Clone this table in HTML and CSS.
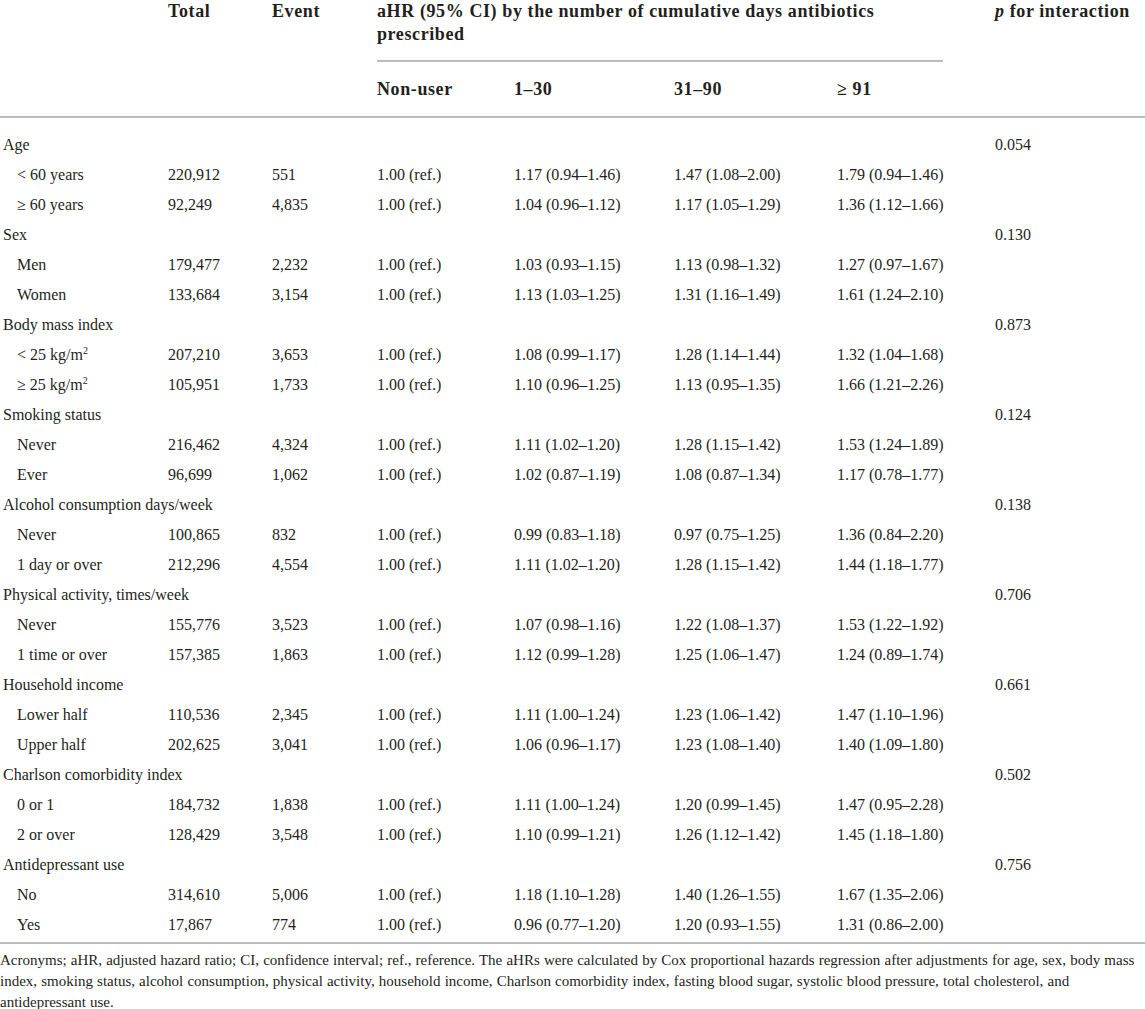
FILE: index.html
```html
<!DOCTYPE html>
<html>
<head>
  <meta charset="UTF-8">
  <link rel="stylesheet" href="styles.css">
  <title>aHR by cumulative days of antibiotics</title>
</head>
<body>
  <table class="results">
    <colgroup>
      <col class="c-label">
      <col class="c-total">
      <col class="c-event">
      <col class="c-non">
      <col class="c-d1">
      <col class="c-d2">
      <col class="c-d3">
      <col class="c-p">
    </colgroup>
    <thead>
      <tr>
	<th rowspan="2"></th>
	<th rowspan="2">Total</th>
	<th rowspan="2">Event</th>
	<th colspan="4" class="span"><div class="span-title">aHR (95% CI) by the number of cumulative days antibiotics prescribed</div></th>
	<th rowspan="2"><i>p</i> for interaction</th>
      </tr>
      <tr class="sub">
	<th>Non-user</th>
	<th>1&ndash;30</th>
	<th>31&ndash;90</th>
	<th>&ge; 91</th>
      </tr>
    </thead>
    <tbody>
      <tr class="group first"><td>Age</td><td></td><td></td><td></td><td></td><td></td><td></td><td>0.054</td></tr>
      <tr><td class="ind">&lt; 60 years</td><td>220,912</td><td>551</td><td>1.00 (ref.)</td><td>1.17 (0.94&ndash;1.46)</td><td>1.47 (1.08&ndash;2.00)</td><td>1.79 (0.94&ndash;1.46)</td><td></td></tr>
      <tr><td class="ind">&ge; 60 years</td><td>92,249</td><td>4,835</td><td>1.00 (ref.)</td><td>1.04 (0.96&ndash;1.12)</td><td>1.17 (1.05&ndash;1.29)</td><td>1.36 (1.12&ndash;1.66)</td><td></td></tr>

      <tr class="group"><td>Sex</td><td></td><td></td><td></td><td></td><td></td><td></td><td>0.130</td></tr>
      <tr><td class="ind">Men</td><td>179,477</td><td>2,232</td><td>1.00 (ref.)</td><td>1.03 (0.93&ndash;1.15)</td><td>1.13 (0.98&ndash;1.32)</td><td>1.27 (0.97&ndash;1.67)</td><td></td></tr>
      <tr><td class="ind">Women</td><td>133,684</td><td>3,154</td><td>1.00 (ref.)</td><td>1.13 (1.03&ndash;1.25)</td><td>1.31 (1.16&ndash;1.49)</td><td>1.61 (1.24&ndash;2.10)</td><td></td></tr>

      <tr class="group"><td>Body mass index</td><td></td><td></td><td></td><td></td><td></td><td></td><td>0.873</td></tr>
      <tr><td class="ind">&lt; 25 kg/m<sup>2</sup></td><td>207,210</td><td>3,653</td><td>1.00 (ref.)</td><td>1.08 (0.99&ndash;1.17)</td><td>1.28 (1.14&ndash;1.44)</td><td>1.32 (1.04&ndash;1.68)</td><td></td></tr>
      <tr><td class="ind">&ge; 25 kg/m<sup>2</sup></td><td>105,951</td><td>1,733</td><td>1.00 (ref.)</td><td>1.10 (0.96&ndash;1.25)</td><td>1.13 (0.95&ndash;1.35)</td><td>1.66 (1.21&ndash;2.26)</td><td></td></tr>

      <tr class="group"><td>Smoking status</td><td></td><td></td><td></td><td></td><td></td><td></td><td>0.124</td></tr>
      <tr><td class="ind">Never</td><td>216,462</td><td>4,324</td><td>1.00 (ref.)</td><td>1.11 (1.02&ndash;1.20)</td><td>1.28 (1.15&ndash;1.42)</td><td>1.53 (1.24&ndash;1.89)</td><td></td></tr>
      <tr><td class="ind">Ever</td><td>96,699</td><td>1,062</td><td>1.00 (ref.)</td><td>1.02 (0.87&ndash;1.19)</td><td>1.08 (0.87&ndash;1.34)</td><td>1.17 (0.78&ndash;1.77)</td><td></td></tr>

      <tr class="group"><td>Alcohol consumption days/week</td><td></td><td></td><td></td><td></td><td></td><td></td><td>0.138</td></tr>
      <tr><td class="ind">Never</td><td>100,865</td><td>832</td><td>1.00 (ref.)</td><td>0.99 (0.83&ndash;1.18)</td><td>0.97 (0.75&ndash;1.25)</td><td>1.36 (0.84&ndash;2.20)</td><td></td></tr>
      <tr><td class="ind">1 day or over</td><td>212,296</td><td>4,554</td><td>1.00 (ref.)</td><td>1.11 (1.02&ndash;1.20)</td><td>1.28 (1.15&ndash;1.42)</td><td>1.44 (1.18&ndash;1.77)</td><td></td></tr>

      <tr class="group"><td>Physical activity, times/week</td><td></td><td></td><td></td><td></td><td></td><td></td><td>0.706</td></tr>
      <tr><td class="ind">Never</td><td>155,776</td><td>3,523</td><td>1.00 (ref.)</td><td>1.07 (0.98&ndash;1.16)</td><td>1.22 (1.08&ndash;1.37)</td><td>1.53 (1.22&ndash;1.92)</td><td></td></tr>
      <tr><td class="ind">1 time or over</td><td>157,385</td><td>1,863</td><td>1.00 (ref.)</td><td>1.12 (0.99&ndash;1.28)</td><td>1.25 (1.06&ndash;1.47)</td><td>1.24 (0.89&ndash;1.74)</td><td></td></tr>

      <tr class="group"><td>Household income</td><td></td><td></td><td></td><td></td><td></td><td></td><td>0.661</td></tr>
      <tr><td class="ind">Lower half</td><td>110,536</td><td>2,345</td><td>1.00 (ref.)</td><td>1.11 (1.00&ndash;1.24)</td><td>1.23 (1.06&ndash;1.42)</td><td>1.47 (1.10&ndash;1.96)</td><td></td></tr>
      <tr><td class="ind">Upper half</td><td>202,625</td><td>3,041</td><td>1.00 (ref.)</td><td>1.06 (0.96&ndash;1.17)</td><td>1.23 (1.08&ndash;1.40)</td><td>1.40 (1.09&ndash;1.80)</td><td></td></tr>

      <tr class="group"><td>Charlson comorbidity index</td><td></td><td></td><td></td><td></td><td></td><td></td><td>0.502</td></tr>
      <tr><td class="ind">0 or 1</td><td>184,732</td><td>1,838</td><td>1.00 (ref.)</td><td>1.11 (1.00&ndash;1.24)</td><td>1.20 (0.99&ndash;1.45)</td><td>1.47 (0.95&ndash;2.28)</td><td></td></tr>
      <tr><td class="ind">2 or over</td><td>128,429</td><td>3,548</td><td>1.00 (ref.)</td><td>1.10 (0.99&ndash;1.21)</td><td>1.26 (1.12&ndash;1.42)</td><td>1.45 (1.18&ndash;1.80)</td><td></td></tr>

      <tr class="group"><td>Antidepressant use</td><td></td><td></td><td></td><td></td><td></td><td></td><td>0.756</td></tr>
      <tr><td class="ind">No</td><td>314,610</td><td>5,006</td><td>1.00 (ref.)</td><td>1.18 (1.10&ndash;1.28)</td><td>1.40 (1.26&ndash;1.55)</td><td>1.67 (1.35&ndash;2.06)</td><td></td></tr>
      <tr class="last"><td class="ind">Yes</td><td>17,867</td><td>774</td><td>1.00 (ref.)</td><td>0.96 (0.77&ndash;1.20)</td><td>1.20 (0.93&ndash;1.55)</td><td>1.31 (0.86&ndash;2.00)</td><td></td></tr>
    </tbody>
  </table>
  <p class="note">
    Acronyms; aHR, adjusted hazard ratio; CI, confidence interval; ref., reference. The aHRs were calculated by Cox proportional hazards regression after adjustments for age, sex, body mass index, smoking status, alcohol consumption, physical activity, household income, Charlson comorbidity index, fasting blood sugar, systolic blood pressure, total cholesterol, and<br>
    antidepressant use.
  </p>
</body>
</html>
```
FILE: styles.css
```css
    body {
	margin: 0;
	background: #ffffff;
	color: #231f20;
	font-family: "Liberation Serif", "Times New Roman", serif;
    }
    table.results {
	width: 1145px;
	table-layout: fixed;
	border-collapse: collapse;
	text-align: left;
    }
    col.c-label { width: 165px; }
    col.c-total { width: 104px; }
    col.c-event { width: 105px; }
    col.c-non   { width: 137px; }
    col.c-d1    { width: 160px; }
    col.c-d2    { width: 163px; }
    col.c-d3    { width: 158px; }
    col.c-p     { width: 153px; }

    table.results thead {
	border-bottom: 2px solid #bcbcbc;
    }
    table.results th {
	font-size: 18px;
	font-weight: bold;
	letter-spacing: 0.6px;
	line-height: 23px;
	padding: 0 3px;
	vertical-align: top;
	white-space: nowrap;
    }
    table.results th.span {
	white-space: normal;
	padding-right: 50px;
    }
    .span-title {
	padding-bottom: 14px;
	border-bottom: 2px solid #bcbcbc;
	width: 566px;
    }
    table.results tr.sub th {
	height: 54px;
	vertical-align: middle;
    }
    table.results tbody {
	border-bottom: 2px solid #bcbcbc;
    }
    table.results td {
	font-size: 16px;
	height: 30px;
	padding: 0 3px;
	line-height: 20px;
	vertical-align: middle;
	white-space: nowrap;
    }
    table.results tr.first td {
	padding-top: 12px;
    }
    table.results tr.last td {
	padding-bottom: 2px;
    }
    td.ind {
	padding-left: 17px !important;
    }
    sup {
	font-size: 10px;
	line-height: 0;
    }
    .note {
	margin: 6px 0 0 0;
	font-size: 15px;
	word-spacing: 0.4px;
	line-height: 21px;
	padding-right: 4px;
    }
```
